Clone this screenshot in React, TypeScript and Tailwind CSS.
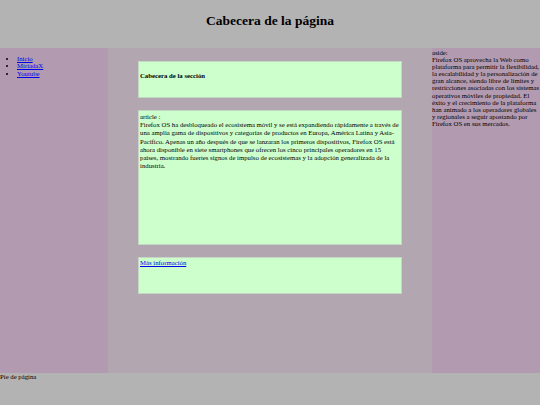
const navLinks = ["Inicio", "MiriadaX", "Youtube"]

export default function App() {
  return (
    <div className="w-[540px] h-[405px] flex flex-col font-['Liberation_Serif',serif] text-black">
      <header className="h-[48px] shrink-0 bg-[#b3b3b3] pt-[13px] text-center text-[13.5px] font-bold leading-[15px]">
        Cabecera de la página
      </header>
      <div className="flex h-[325px] shrink-0">
        <nav className="w-[108px] bg-[#b29ab1] text-[6.75px] leading-[7.5px]">
          <ul className="list-disc mt-[6.75px] pl-[17px]">
            {navLinks.map((l) => (
              <li key={l}>
                <a href="#" className="text-[#0000ee] underline">
                  {l}
                </a>
              </li>
            ))}
          </ul>
        </nav>
        <main className="w-[324px] bg-[#b2a6b0] px-[30px] pt-[13px] flex flex-col gap-[12px]">
          <section className="h-[37px] border border-[#c4d6c4] bg-[#ccffcc] px-[1px] pt-[9.5px] text-[6.75px] leading-[7.5px] font-bold">
            Cabecera de la sección
          </section>
          <article className="h-[135px] border border-[#c4d6c4] bg-[#ccffcc] px-[1px] pt-[2px] text-[6.75px] leading-[8.2px]">
            article :
            <br />
            Firefox OS ha desbloqueado el ecosistema móvil y se está expandiendo rápidamente a través de una
            amplia gama de dispositivos y categorías de productos en Europa, América Latina y Asia-Pacífico.
            Apenas un año después de que se lanzaran los primeros dispositivos, Firefox OS está ahora disponible
            en siete smartphones que ofrecen los cinco principales operadores en 15 países, mostrando fuertes
            signos de impulso de ecosistemas y la adopción generalizada de la industria.
          </article>
          <div className="h-[37px] border border-[#c4d6c4] bg-[#ccffcc] px-[1px] pt-[1px] text-[6.75px] leading-[8px]">
            <a href="#" className="text-[#0000ee] underline">
              Más información
            </a>
          </div>
        </main>
        <aside className="w-[108px] bg-[#b29ab1] text-[6.75px] leading-[7.1px] pt-[1px]">
          aside:
          <br />
          Firefox OS aprovecha la Web como plataforma para permitir la flexibilidad, la escalabilidad y la
          personalización de gran alcance, siendo libre de límites y restricciones asociadas con los sistemas
          operativos móviles de propiedad. El éxito y el crecimiento de la plataforma han animado a los
          operadores globales y regionales a seguir apostando por Firefox OS en sus mercados.
        </aside>
      </div>
      <footer className="flex-1 bg-[#b3b3b3] text-[6.75px] leading-[7.5px]">Pie de página</footer>
    </div>
  )
}
